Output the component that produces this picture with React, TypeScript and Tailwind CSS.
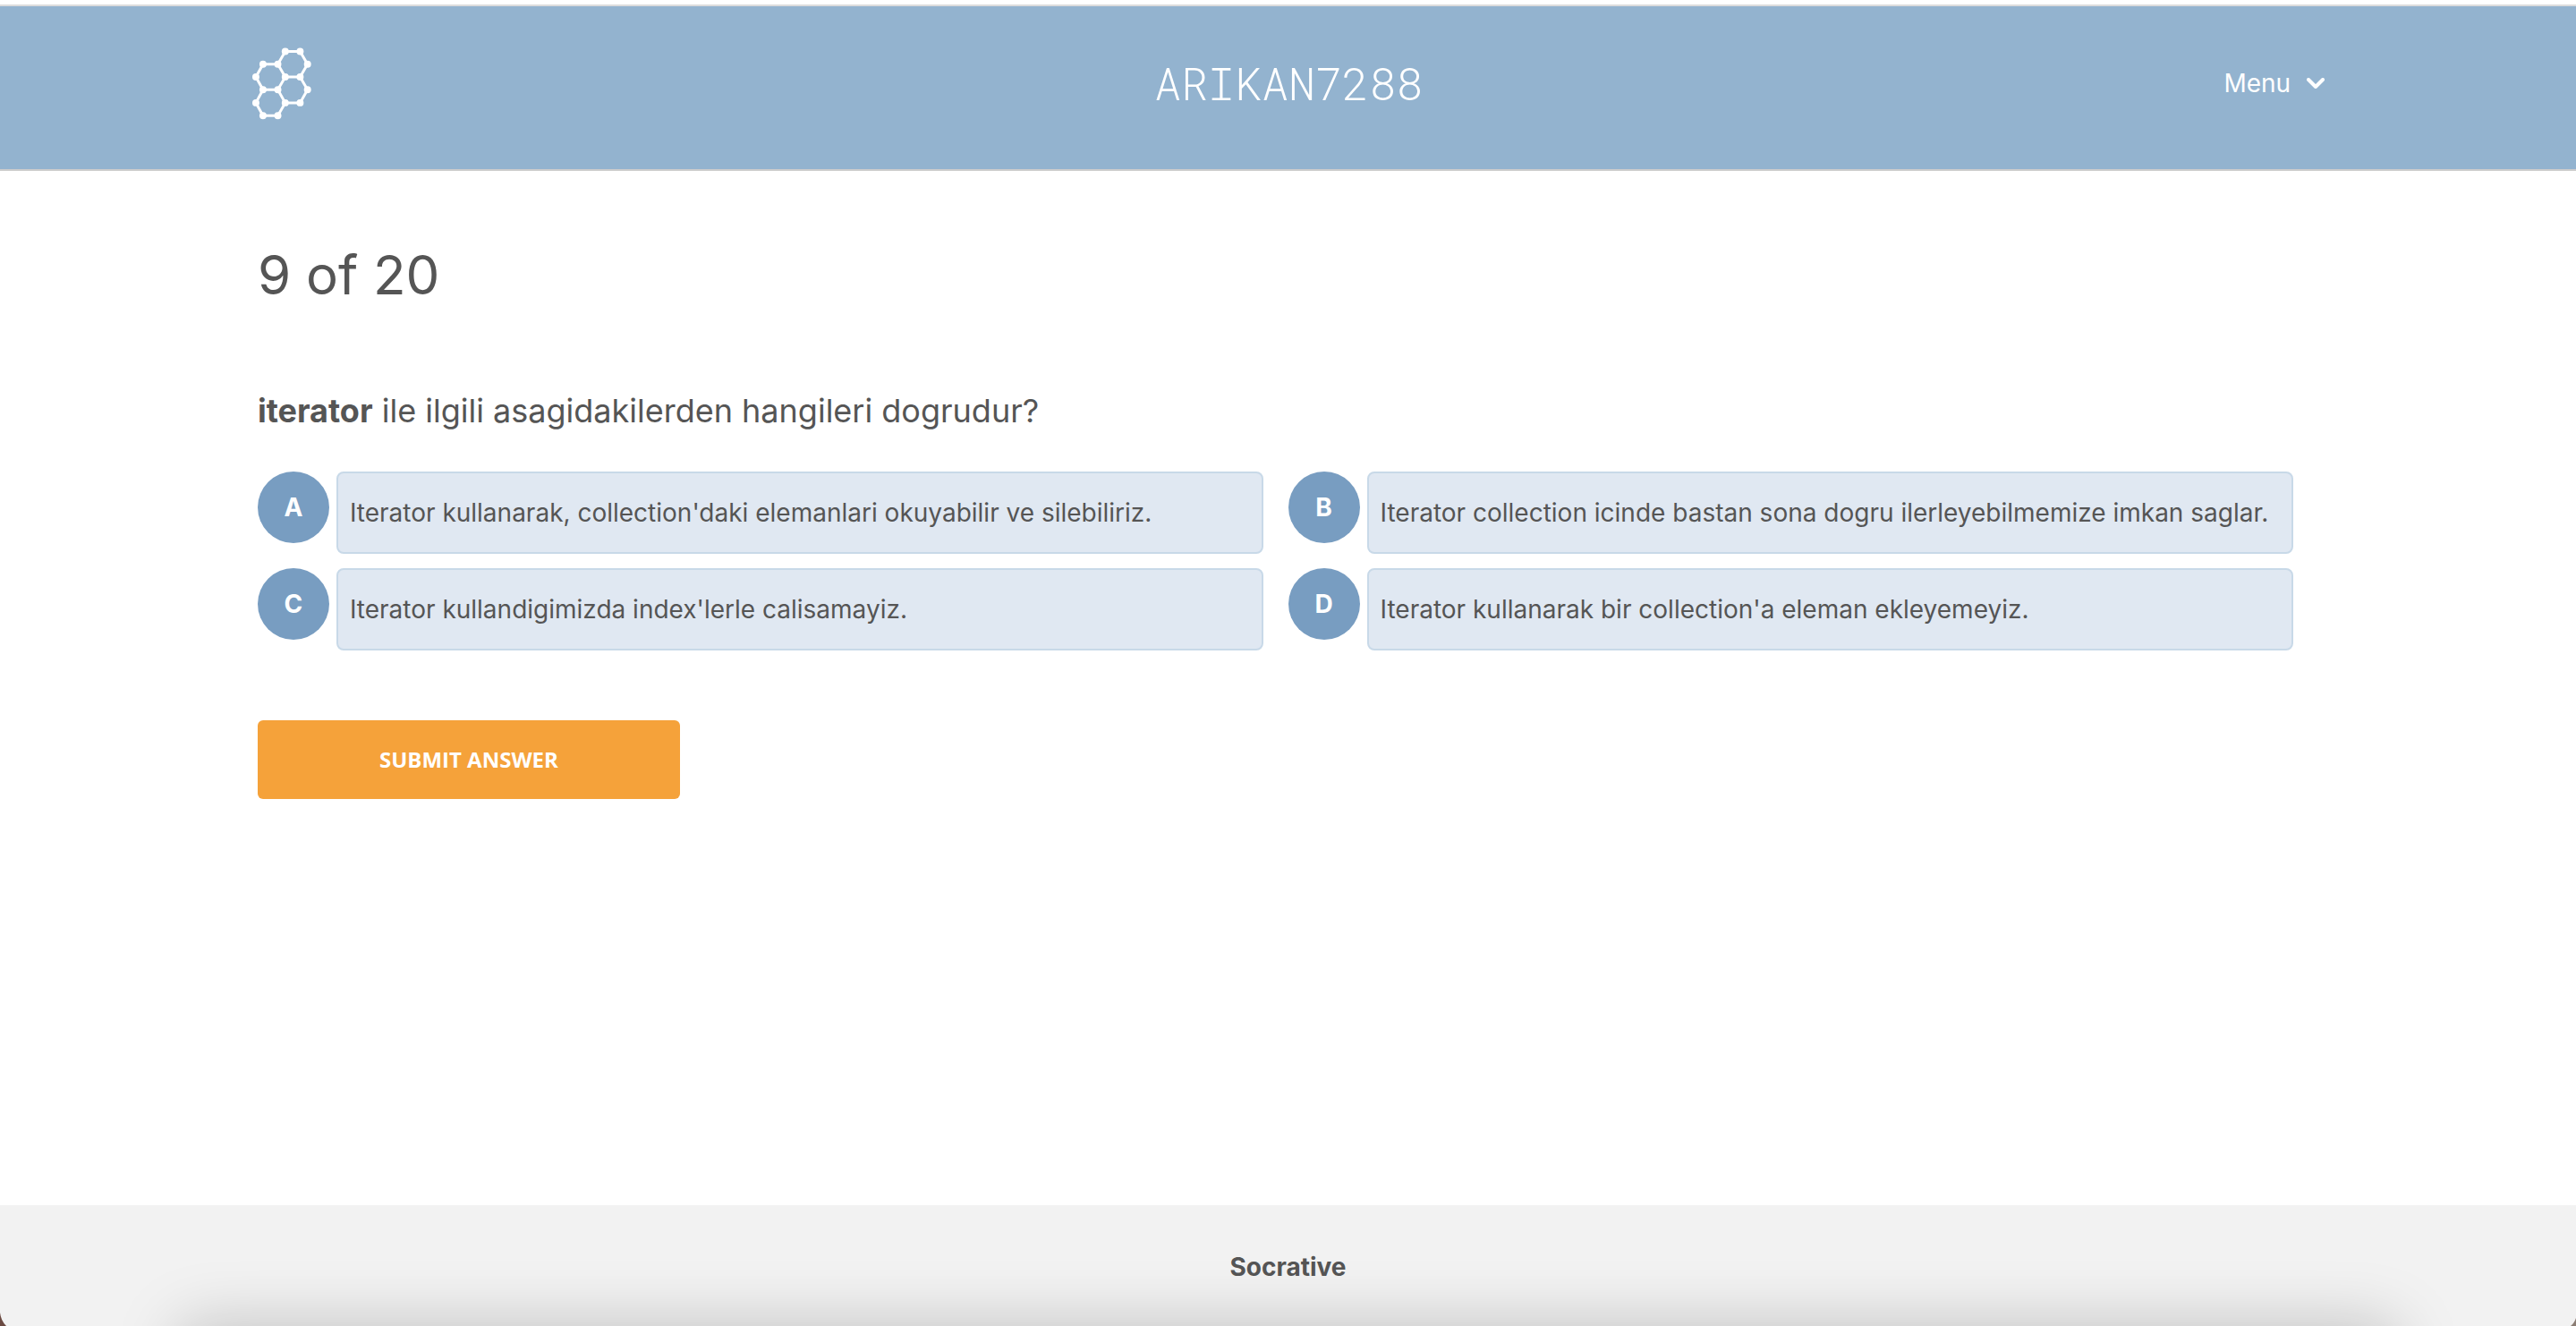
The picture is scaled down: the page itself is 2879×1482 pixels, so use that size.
const options = [
  { letter: "A", text: "Iterator kullanarak, collection'daki elemanlari okuyabilir ve silebiliriz." },
  { letter: "B", text: "Iterator collection icinde bastan sona dogru ilerleyebilmemize imkan saglar." },
  { letter: "C", text: "Iterator kullandigimizda index'lerle calisamayiz." },
  { letter: "D", text: "Iterator kullanarak bir collection'a eleman ekleyemeyiz." },
];

const logoNodes: [number, number][] = [
  [176, 171], [226, 171], [251, 214], [226, 257], [176, 257], [151, 214],
  [101, 214], [77, 257], [101, 300], [151, 300], [251, 300], [226, 344],
  [176, 344], [77, 344], [101, 387], [151, 387],
];

function Logo() {
  return (
    <svg className="h-[81px] w-[66px]" viewBox="65 158 199 243" role="img" aria-label="Socrative">
      <g fill="none" stroke="#fff" strokeWidth="9">
        <path d="M176 171H226L251 214L226 257H176L151 214Z" />
        <path d="M151 214H101L77 257L101 300H151L176 257" />
        <path d="M226 257L251 300L226 344H176L151 300" />
        <path d="M101 300L77 344L101 387H151L176 344" />
      </g>
      {logoNodes.map(([x, y]) => (
        <circle key={`${x}-${y}`} cx={x} cy={y} r="12" fill="#fff" />
      ))}
    </svg>
  );
}

function Header() {
  return (
    <header className="mt-[5px] grid h-[186px] grid-cols-3 items-start border-t-2 border-b-2 border-t-[#dcdcdc] border-b-[#cccccc] bg-[#93b3cf] pr-[calc(10%-7px)] pl-[calc(10%-6px)] text-white">
      <div className="pt-[46px]">
        <Logo />
      </div>
      <div className="pt-[54px] text-center font-['Roboto_Mono','Liberation_Mono',monospace] text-[50px] leading-[64px] font-light">
        ARIKAN7288
      </div>
      <button type="button" className="mt-[66px] flex items-center gap-[18px] justify-self-end text-[28px] leading-[40px]">
        Menu
        <svg className="h-3 w-5" viewBox="0 0 20 12" fill="none" stroke="currentColor" strokeWidth="4" strokeLinecap="round" strokeLinejoin="round" aria-hidden="true">
          <path d="M2 2L10 10L18 2" />
        </svg>
      </button>
    </header>
  );
}

function Option({ letter, text }: { letter: string; text: string }) {
  return (
    <button type="button" className="flex items-start gap-2 pr-7 text-left">
      <span className="flex size-20 shrink-0 items-center justify-center rounded-full bg-[#789dc1] text-[28px] leading-[40px] font-bold text-white">
        {letter}
      </span>
      <span className="grow rounded-lg border-2 border-[#c8d9e8] bg-[#e0e8f2] px-[13px] py-6 text-[28px] leading-[40px]">
        {text}
      </span>
    </button>
  );
}

function Footer() {
  return (
    <footer className="relative h-[135px] overflow-hidden bg-[#f2f2f2] pt-[49px] text-center text-[28px] leading-[40px] font-bold">
      Socrative
      <div className="absolute inset-x-[7%] top-full h-40 shadow-[0_0_72px_rgba(0,0,0,0.21)]" />
      <svg className="absolute bottom-0 left-0 h-[15px] w-[7px]" viewBox="0 0 7 15" aria-hidden="true">
        <path d="M0 0Q1 9 7 15H0Z" fill="#6b4a42" />
      </svg>
      <svg className="absolute right-0 bottom-0 h-[9px] w-[6px]" viewBox="0 0 6 9" aria-hidden="true">
        <path d="M6 0Q4 6 0 9H6Z" fill="#8b7d74" />
      </svg>
    </footer>
  );
}

export default function App() {
  return (
    <div className="flex min-h-screen flex-col bg-white font-['Inter',sans-serif] text-[#555555]">
      <Header />
      <main className="grow px-[10%] pt-20">
        <h1 className="text-[60px] leading-[72px]">9 of 20</h1>
        <h2 className="mt-[92px] text-[36px] leading-[48px]">
          <strong className="font-bold">iterator</strong> ile ilgili asagidakilerden hangileri dogrudur?
        </h2>
        <div className="mt-11 grid grid-cols-2 gap-y-4">
          {options.map((option) => (
            <Option key={option.letter} letter={option.letter} text={option.text} />
          ))}
        </div>
        <button type="button" className="mt-[78px] h-[88px] w-[472px] rounded-md bg-[#f5a23a] font-['Open_Sans',sans-serif] text-[24px] leading-[32px] font-bold text-white">
          SUBMIT ANSWER
        </button>
      </main>
      <Footer />
    </div>
  );
}
